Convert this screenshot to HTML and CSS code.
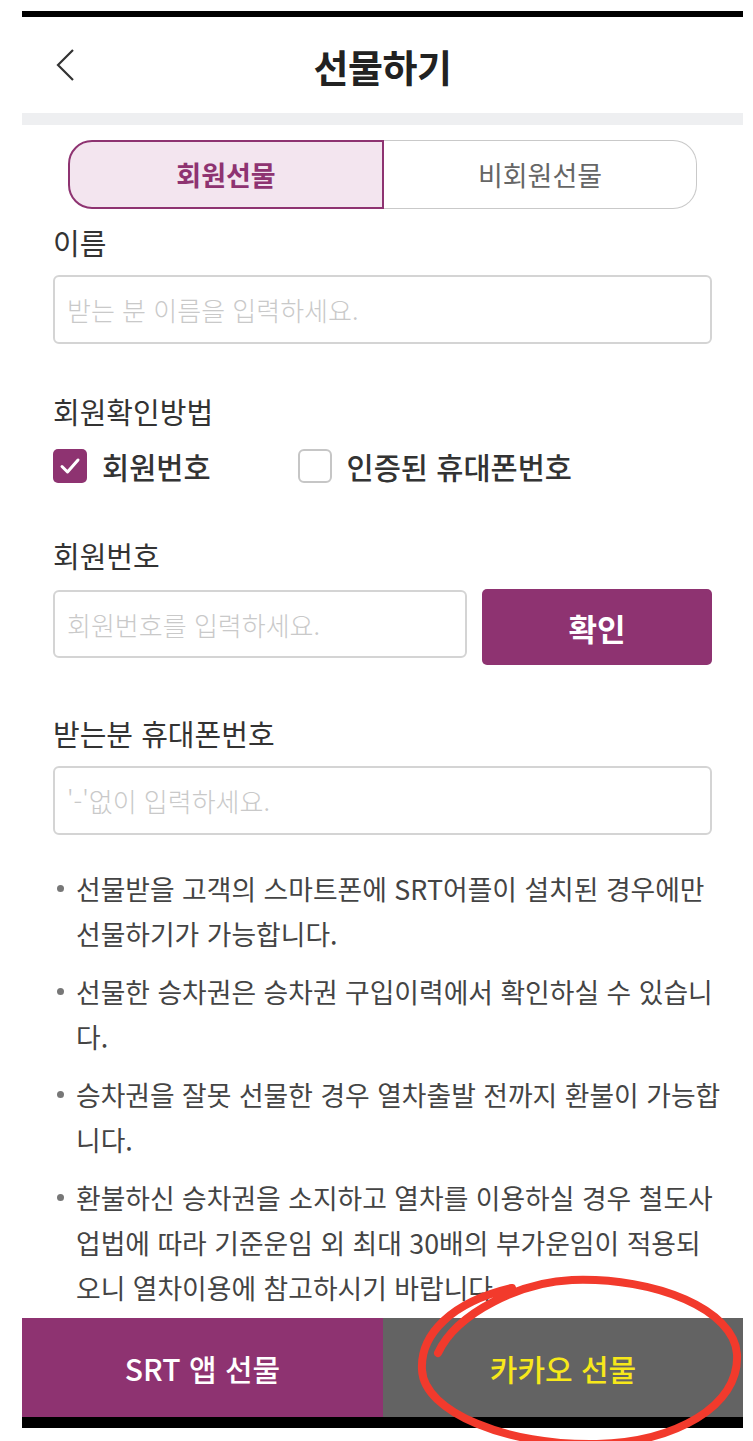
FILE: index.html
```html
<!DOCTYPE html>
<html lang="ko">
<head>
    <meta charset="UTF-8">
    <meta name="viewport" content="width=device-width, initial-scale=1.0">
    <title>선물하기</title>
    <link rel="stylesheet" href="styles.css">
</head>
<body>
    <div class="phone">
        <header class="topbar">
            <svg class="back" width="24" height="36" viewBox="0 0 24 36">
                <polyline points="18,3 3,18 18,33" fill="none" stroke="#333" stroke-width="2.2"/>
            </svg>
            <h1 class="title">선물하기</h1>
        </header>
        <div class="divider"></div>

        <main class="content">
            <div class="segment">
                <button class="seg seg-on">회원선물</button>
                <button class="seg seg-off">비회원선물</button>
            </div>

            <div class="field field-first">
                <div class="label">이름</div>
                <input type="text" class="input-field" placeholder="받는 분 이름을 입력하세요.">
            </div>

            <div class="field field-method">
                <div class="label">회원확인방법</div>
                <div class="check-row">
                    <label class="check">
                        <span class="box box-on">
                            <svg width="34" height="34" viewBox="0 0 34 34">
                                <polyline points="9,17.5 14.5,23 25,11" fill="none" stroke="#fff" stroke-width="3" stroke-linecap="round" stroke-linejoin="round"/>
                            </svg>
                        </span>
                        회원번호
                    </label>
                    <label class="check">
                        <span class="box"></span>
                        인증된 휴대폰번호
                    </label>
                </div>
            </div>

            <div class="field field-member">
                <div class="label">회원번호</div>
                <div class="input-row">
                    <input type="text" class="input-field" placeholder="회원번호를 입력하세요.">
                    <button class="confirm-button">확인</button>
                </div>
            </div>

            <div class="field field-phone">
                <div class="label">받는분 휴대폰번호</div>
                <input type="text" class="input-field" placeholder="'-'없이 입력하세요.">
            </div>

            <ul class="notice">
                <li>선물받을 고객의 스마트폰에 SRT어플이 설치된 경우에만 선물하기가 가능합니다.</li>
                <li>선물한 승차권은 승차권 구입이력에서 확인하실 수 있습니다.</li>
                <li>승차권을 잘못 선물한 경우 열차출발 전까지 환불이 가능합니다.</li>
                <li>환불하신 승차권을 소지하고 열차를 이용하실 경우 철도사업법에 따라 기준운임 외 최대 30배의 부가운임이 적용되오니 열차이용에 참고하시기 바랍니다.</li>
            </ul>
        </main>

        <footer class="actions">
            <button class="action srt-button">SRT 앱 선물</button>
            <button class="action kakao-button">카카오 선물</button>
        </footer>
    </div>

    <!-- red pen mark drawn over the screenshot -->
    <svg class="pen-mark" width="335" height="169" viewBox="0 0 335 169">
        <path d="M 26 81 C 45 40, 110 10, 160 8 C 245 5, 322 38, 325 82 C 328 135, 262 170, 185 172 C 95 174, 12 140, 10 98 C 8 62, 40 30, 100 16"
              fill="none" stroke="#f23a2c" stroke-width="8" stroke-linecap="round"/>
    </svg>
</body>
</html>
```

FILE: styles.css
```css
body {
    margin: 0;
    background: #fff;
    font-family: "Noto Sans CJK KR", "Noto Sans", sans-serif;
    color: #333;
    overflow: hidden;
}

.phone {
    margin: 11px 0 0 22px;
    width: 721px;
    border-top: 6px solid #000;
    border-bottom: 11px solid #000;
    background: #fff;
}

.topbar {
    height: 96px;
    display: flex;
    align-items: center;
    justify-content: center;
    position: relative;
}

.back {
    position: absolute;
    left: 33px;
    top: 30px;
}

.title {
    margin: 0;
    font-size: 38px;
    font-weight: 700;
    color: #222;
    letter-spacing: -0.5px;
}

.divider {
    height: 12px;
    background: #eeeff1;
}

.content {
    height: 1193px;
    overflow: hidden;
    padding: 0 31px;
}

/* tabs */
.segment {
    display: flex;
    margin: 15px 15px 0;
    height: 69px;
}

.seg {
    flex: 1;
    font-family: inherit;
    font-size: 27px;
    background: #fff;
    cursor: pointer;
}

.seg-on {
    border: 2px solid #8e3371;
    border-radius: 24px 0 0 24px;
    background: #f3e5ef;
    color: #8e3371;
    font-weight: 700;
}

.seg-off {
    border: 1.5px solid #c9c9c9;
    border-left: none;
    border-radius: 0 24px 24px 0;
    color: #666;
}

/* form */
.field {
    margin-top: 53px;
}

.field-first {
    margin-top: 18px;
}

.field-method {
    margin-top: 52px;
}

.field-member {
    margin-top: 57px;
}

.label {
    font-size: 29px;
    line-height: 30px;
    color: #333;
    margin-bottom: 18px;
}

.field-method .label {
    margin-bottom: 22px;
}

.field-member .label {
    margin-bottom: 19px;
}

.input-field {
    display: block;
    box-sizing: border-box;
    width: 100%;
    height: 69px;
    padding: 0 12px;
    border: 2px solid #d4d4d4;
    border-radius: 6px;
    font-family: inherit;
    font-size: 26px;
    color: #333;
    outline: none;
}

.input-field::placeholder {
    color: #c9c9c9;
    font-weight: 300;
}

.check-row {
    display: flex;
    align-items: center;
    height: 35px;
}

.check {
    display: flex;
    align-items: center;
    gap: 15px;
    font-size: 29.5px;
    font-weight: 500;
    color: #333;
    margin-right: 87px;
}

.box {
    box-sizing: border-box;
    width: 34px;
    height: 34px;
    border: 2px solid #c6c6c6;
    border-radius: 6px;
    background: #fff;
}

.box-on {
    border: none;
    background: #8e3371;
    border-radius: 5px;
}

.box-on svg {
    display: block;
}

.input-row {
    display: flex;
    align-items: flex-start;
    gap: 15px;
}

.input-row .input-field {
    flex: 1;
    height: 68px;
    margin-top: 1px;
}

.confirm-button {
    flex: 0 0 230px;
    height: 76px;
    border: none;
    border-radius: 5px;
    background: #8e3371;
    color: #fff;
    font-family: inherit;
    font-size: 31px;
    font-weight: 700;
    cursor: pointer;
}

/* notice */
.notice {
    list-style: none;
    margin: 31px -9.5px 0 0;
    padding: 0 0 0 23px;
    font-size: 26.8px;
    line-height: 45px;
    color: #444;
    word-break: break-all;
}

.notice li {
    position: relative;
    margin-bottom: 13px;
}

.notice li::before {
    content: "";
    position: absolute;
    left: -19px;
    top: 19px;
    width: 7px;
    height: 7px;
    border-radius: 50%;
    background: #777;
}

/* bottom buttons */
.actions {
    display: flex;
    height: 99px;
}

.action {
    border: none;
    font-family: inherit;
    font-size: 30px;
    font-weight: 500;
    cursor: pointer;
}

.srt-button {
    flex: 0 0 361px;
    background: #8e3371;
    color: #fff;
}

.kakao-button {
    flex: 1;
    background: #636363;
    color: #f7e81a;
}

.pen-mark {
    position: absolute;
    left: 412px;
    top: 1272px;
    overflow: visible;
}
```
